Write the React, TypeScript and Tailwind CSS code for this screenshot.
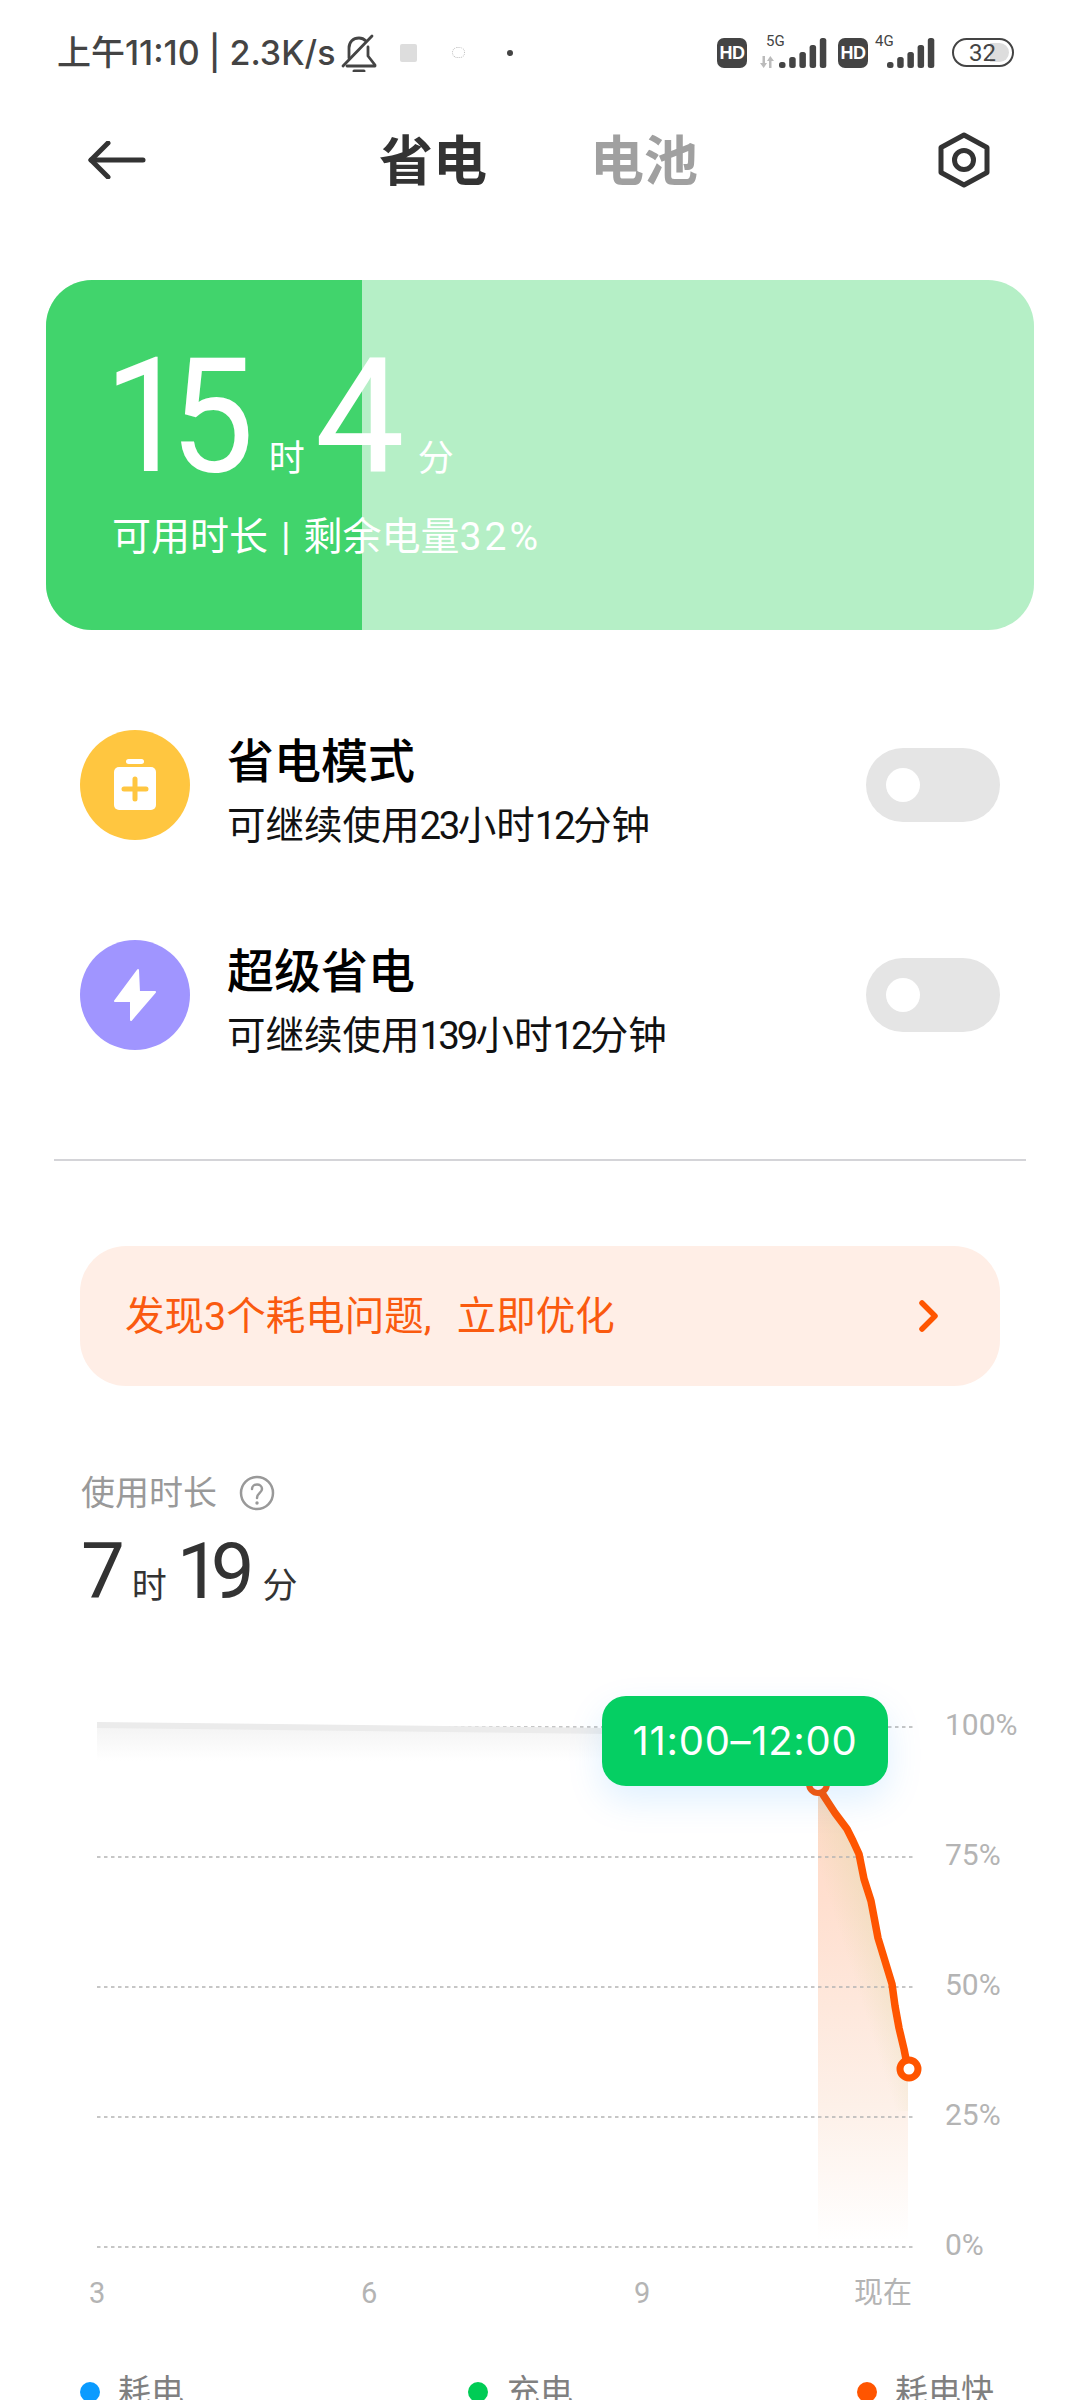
import React from "react";

function Signal() {
  const hs = [6, 11, 16, 23, 30];
  return (
    <svg width="48" height="31" viewBox="0 0 48 31" className="block">
      {hs.map((h, i) => (
        <rect key={i} x={i * 10.2} y={31 - h} width="6.5" height={h} rx="2.5" fill="#444444" />
      ))}
    </svg>
  );
}

function Bell() {
  return (
    <svg width="36" height="38" viewBox="0 0 36 38" fill="none" stroke="#444444" strokeWidth="2.8" strokeLinecap="round" strokeLinejoin="round" className="block">
      <path d="M2 32 L31 2" />
      <path d="M8 24 V14 C8 8 12 4 18 4 C21 4 23 5 25 7" />
      <path d="M27 13 V22 L34 31 V32 H6" />
      <path d="M13 37 H23" strokeWidth="3" />
    </svg>
  );
}

function HD() {
  return (
    <div className="w-[30px] h-[30px] rounded-[7px] bg-[#444444] flex items-center justify-center text-white text-[18px] leading-none font-bold font-['Liberation_Sans',sans-serif] tracking-[-0.5px]">
      HD
    </div>
  );
}

function Toggle() {
  return (
    <div className="w-[134px] h-[74px] rounded-full bg-[#e5e5e5] flex items-center pl-[20px]">
      <div className="w-[34px] h-[34px] rounded-full bg-white" />
    </div>
  );
}

function Mode({ title, sub, color, icon, className }: { title: string; sub: React.ReactNode; color: string; icon: React.ReactNode; className?: string }) {
  return (
    <div className={"flex items-center h-[110px] pl-[80px] pr-[80px] " + (className || "")}>
      <div className={"w-[110px] h-[110px] rounded-full shrink-0 " + color}>{icon}</div>
      <div className="ml-[37px] flex-1 flex flex-col pt-[14px]">
        <div className="text-[47px] leading-[50px] font-medium text-black">{title}</div>
        <div className="text-[38.5px] leading-[44px] mt-[17px] text-[#111111]">{sub}</div>
      </div>
      <Toggle />
    </div>
  );
}

const gridYs = [1726, 1856, 1986, 2116, 2246];
const curve = "M818 1786 L835 1812 L847 1828 L853 1840 L859 1853 L864 1878 L871 1900 L878 1937 L892 1983 L895 2005 L899 2027 L904 2048 L908 2068";

function Chart() {
  return (
    <svg width="930" height="600" viewBox="0 1661 930 600" className="block shrink-0">
      <defs>
        <linearGradient id="fade" x1="0" y1="1786" x2="0" y2="2240" gradientUnits="userSpaceOnUse">
          <stop offset="0" stopColor="#ffd9c6" />
          <stop offset="0.25" stopColor="#ffdfcf" />
          <stop offset="0.7" stopColor="#fdf0e8" />
          <stop offset="1" stopColor="#ffffff" />
        </linearGradient>
        <linearGradient id="tinge" x1="833" y1="1912" x2="871" y2="1900" gradientUnits="userSpaceOnUse">
          <stop offset="0" stopColor="#d8d8a0" stopOpacity="0" />
          <stop offset="1" stopColor="#d8d8a0" stopOpacity="0.32" />
        </linearGradient>
        <linearGradient id="greyFade" x1="0" y1="1726" x2="0" y2="1760" gradientUnits="userSpaceOnUse">
          <stop offset="0" stopColor="#f4f4f4" />
          <stop offset="1" stopColor="#ffffff" />
        </linearGradient>
      </defs>
      <path d="M97 1724 L610 1730 V1760 H97 Z" fill="url(#greyFade)" />
      <path d={curve + " V2240 H818 Z"} fill="url(#fade)" />
      <path d={curve + " L908 2110 H818 Z"} fill="url(#tinge)" />
      {gridYs.map((y) => (
        <line key={y} x1="97" x2="915" y1={y} y2={y} stroke="#b4b4b4" strokeWidth="1.5" strokeDasharray="3.5 3.5" />
      ))}
      <path d="M97 1724 L610 1730" stroke="#ebebeb" strokeWidth="6" fill="none" />
      <path d={curve} stroke="#ff5500" strokeWidth="7.5" fill="none" strokeLinejoin="round" strokeLinecap="round" />
      <circle cx="818" cy="1783" r="9" fill="#ffffff" stroke="#ff5500" strokeWidth="6" />
      <circle cx="909" cy="2068" r="9" fill="#ffffff" stroke="#ff5500" strokeWidth="7" />
    </svg>
  );
}

export default function App() {
  return (
    <div className="w-[1080px] h-[2400px] overflow-hidden bg-white font-['Roboto','Noto_Sans_CJK_SC',sans-serif] text-[#333333]">
      {/* status bar */}
      <div className="h-[105px] flex items-center pl-[57px] pr-[66px] text-[#444444]">
        <span className="text-[34px] leading-none font-medium font-['Inter','Noto_Sans_CJK_SC',sans-serif] whitespace-nowrap">上午11:10 | 2.3K/s</span>
        <div className="ml-[6px]"><Bell /></div>
        <div className="ml-[23px] w-[17px] h-[18px] rounded-[2px] bg-[#dddddd]" />
        <div className="ml-[35px] w-[13px] h-[11px] rounded-full border border-dotted border-[#bbbbbb]" />
        <div className="ml-[42px] w-[6px] h-[6px] rounded-full bg-[#444444]" />
        <div className="flex-1" />
        <HD />
        <div className="relative w-[88px] h-[31px] self-center">
          <span className="absolute left-[19px] top-[-3px] text-[15px] leading-[15px]">5G</span>
          <svg width="16" height="12" viewBox="0 0 16 12" className="absolute left-[12px] top-[19px]" fill="#bbbbbb">
            <path d="M3.5 0 H6 V7 H8 L4.7 12 L1 7 H3.5 Z" />
            <path d="M10 12 H12.5 V5 H15 L11.3 0 L8 5 H10 Z" />
          </svg>
          <div className="absolute left-[32px] top-0"><Signal /></div>
        </div>
        <div className="ml-[3px]"><HD /></div>
        <div className="relative w-[84px] h-[31px] self-center">
          <span className="absolute left-[7px] top-[-3px] text-[15px] leading-[15px]">4G</span>
          <div className="absolute left-[19px] top-0"><Signal /></div>
        </div>
        <div className="relative w-[62px] h-[29px] rounded-full border-[2.5px] border-[#444444] overflow-hidden flex items-center justify-center">
          <div className="absolute right-[3px] top-[3px] bottom-[3px] w-[19px] rounded-r-full bg-[#dddddd]" />
          <span className="relative text-[24px] leading-none -ml-[1px]">32</span>
        </div>
      </div>

      {/* nav */}
      <div className="h-[110px] flex items-center pl-[88px] pr-[90px]">
        <svg width="58" height="38" viewBox="0 0 58 38" fill="none" stroke="#333333" strokeWidth="5" strokeLinecap="round" strokeLinejoin="round" className="block">
          <path d="M55 19 H3" />
          <path d="M20 2 L3 19 L20 36" />
        </svg>
        <div className="ml-[233px] pt-[5px] text-[54px] leading-[60px] font-bold text-[#333333]">省电</div>
        <div className="ml-[103px] pt-[5px] text-[54px] leading-[60px] font-bold text-[#a0a0a0]">电池</div>
        <div className="flex-1" />
        <svg width="52" height="56" viewBox="0 0 52 56" fill="none" stroke="#333333" strokeWidth="5" strokeLinejoin="round" className="block">
          <path d="M26 3 L49 15.5 V40.5 L26 53 L3 40.5 V15.5 Z" />
          <circle cx="26" cy="28" r="9.5" />
        </svg>
      </div>

      {/* card */}
      <div className="relative mt-[65px] mx-[46px] h-[350px] rounded-[46px] bg-[#b5efc6] overflow-hidden text-white">
        <div className="absolute left-0 top-0 bottom-0 w-[316px] bg-[#41d46c]" />
        <div className="relative pt-[57px] pl-[58px]">
          <div className="flex items-baseline">
            <span className="inline-block origin-left scale-x-[0.94] text-[160px] leading-none tracking-[-20px]">15</span>
            <span className="ml-[25px] text-[36px] leading-none">时</span>
            <span className="ml-[10px] text-[160px] leading-none">4</span>
            <span className="ml-[13px] text-[36px] leading-none">分</span>
          </div>
          <div className="mt-[20px] ml-[8px] text-[39px] leading-[40px] whitespace-nowrap">
            可用时长<span className="mx-[13px]">|</span>剩余电量<span className="tracking-[3px]">32%</span>
          </div>
        </div>
      </div>

      {/* modes */}
      <Mode
        className="mt-[100px]"
        title="省电模式"
        sub={<>可继续使用<span className="tracking-[-2.5px]">23</span>小时<span className="tracking-[-2.5px]">12</span>分钟</>}
        color="bg-[#ffc640]"
        icon={
          <svg width="110" height="110" viewBox="0 0 110 110" className="block">
            <rect x="46" y="29" width="18" height="5" rx="2.5" fill="#ffffff" />
            <rect x="34" y="37" width="42" height="43" rx="5" fill="#ffffff" />
            <path d="M44 59 H66 M55 49 V69" stroke="#ffc640" strokeWidth="5" strokeLinecap="round" />
          </svg>
        }
      />
      <Mode
        className="mt-[100px]"
        title="超级省电"
        sub={<>可继续使用<span className="tracking-[-3px]">139</span>小时<span className="tracking-[-3px]">12</span>分钟</>}
        color="bg-[#a095ff]"
        icon={
          <svg width="110" height="110" viewBox="0 0 110 110" className="block">
            <path d="M58 30 L35 61 H51 V80 L75 52 H59 Z" fill="#ffffff" stroke="#ffffff" strokeWidth="2" strokeLinejoin="round" />
          </svg>
        }
      />

      <div className="mt-[109px] mx-[54px] h-[2px] bg-[#d4d4d8]" />

      {/* banner */}
      <div className="mt-[85px] mx-[80px] h-[140px] rounded-[46px] bg-[#ffeee6] flex items-center justify-between pl-[45px] pr-[60px]">
        <span className="pt-[2px] text-[39.5px] leading-none text-[#fa5a0f] whitespace-nowrap">
          发现3个耗电问题<span className="inline-block w-[33px]">,</span>立即优化
        </span>
        <svg width="22" height="32" viewBox="0 0 22 32" fill="none" stroke="#ff5500" strokeWidth="5.5" strokeLinecap="round" strokeLinejoin="round" className="block">
          <path d="M4 3 L17 16 L4 29" />
        </svg>
      </div>

      {/* usage */}
      <div className="mt-[89px] pl-[81px] flex items-center h-[36px]">
        <span className="text-[34px] leading-[36px] text-[#999999]">使用时长</span>
        <svg width="36" height="36" viewBox="0 0 36 36" fill="none" className="block ml-[22px]">
          <circle cx="18" cy="18" r="16" stroke="#999999" strokeWidth="2.5" />
          <path d="M13 14 C13 8 23 8 23 14 C23 18 18 18 18 23" stroke="#999999" strokeWidth="2.5" strokeLinecap="round" />
          <circle cx="18" cy="28" r="1.7" fill="#999999" />
        </svg>
      </div>
      <div className="mt-[22px] pl-[81px] flex items-baseline text-[#333333]">
        <span className="text-[78px] leading-none">7</span>
        <span className="ml-[7px] text-[35px] leading-none">时</span>
        <span className="ml-[10px] text-[78px] leading-none tracking-[-10px]">19</span>
        <span className="ml-[18px] text-[35px] leading-none">分</span>
      </div>

      {/* chart */}
      <div className="relative mt-[51px] h-[600px] flex">
        <Chart />
        <div className="flex flex-col -mt-[2px] pl-[15px] text-[30px] text-[#b4b4b4]">
          {["100%", "75%", "50%", "25%", "0%"].map((t) => (
            <div key={t} className="h-[130px] shrink-0 flex items-center leading-none">{t}</div>
          ))}
        </div>
        <div className="absolute left-[602px] top-[34px] w-[286px] h-[90px] rounded-[24px] bg-[#05cf63] shadow-[0_14px_36px_rgba(0,140,255,0.13)] flex items-center justify-center text-white text-[40px] leading-none tracking-[0.7px] font-['Inter',sans-serif]">
          11:00–12:00
        </div>
      </div>
      <div className="mt-[11px] pl-[89px] grid grid-cols-[272px_273px_220px_auto] text-[29px] leading-[40px] text-[#b4b4b4]">
        <span>3</span>
        <span>6</span>
        <span>9</span>
        <span>现在</span>
      </div>

      {/* legend */}
      <div className="mt-[57px] pl-[80px] grid grid-cols-[388px_389px_auto] text-[33px] leading-[44px] text-[#808080]">
        <div className="flex items-center"><span className="w-[20px] h-[20px] rounded-full bg-[#0a9bff] mr-[18px]" />耗电</div>
        <div className="flex items-center"><span className="w-[20px] h-[20px] rounded-full bg-[#00cc55] mr-[19px]" />充电</div>
        <div className="flex items-center"><span className="w-[20px] h-[20px] rounded-full bg-[#ff5500] mr-[18px]" />耗电快</div>
      </div>
    </div>
  );
}
